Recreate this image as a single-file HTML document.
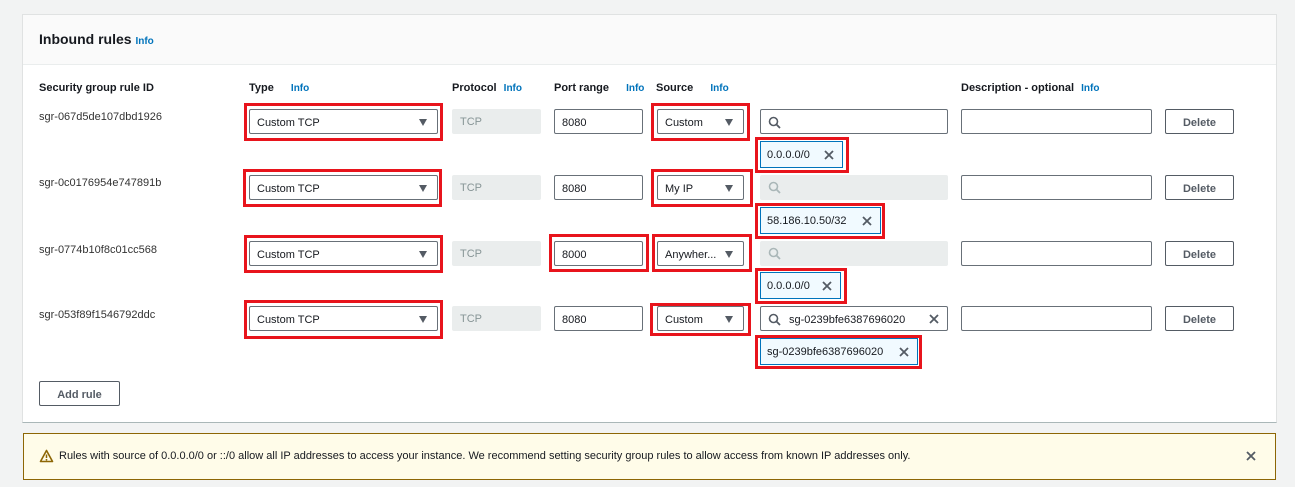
<!DOCTYPE html>
<html><head><meta charset="utf-8"><style>
*{box-sizing:border-box;margin:0;padding:0}
body{width:1295px;height:487px;background:#f2f3f3;font-family:"Liberation Sans",sans-serif;color:#16191f;position:relative;overflow:hidden;font-size:11px}
.a{position:absolute}
.panel{left:22px;top:14px;width:1255px;height:409px;background:#fff;border:1px solid #e0e2e2;border-bottom:1px solid #aab7b8}
.hdr{left:23px;top:15px;width:1253px;height:50px;background:#fafafa;border-bottom:1px solid #eaeded}
.info{color:#0073bb;font-weight:bold;font-size:10px}
.th{font-weight:bold;font-size:11px;top:82px}
.id{font-size:11px;color:#333}
.box{border:1px solid #687078;background:#fff;border-radius:2px;height:25px;line-height:26px;padding-left:7px;font-size:11px;color:#16191f}
.dis{background:#eaeded;border:none;color:#879596;border-radius:2px;height:25px;line-height:27px;padding-left:8px}
.caret{position:absolute;right:10px;top:9px;width:0;height:0;border-left:4.5px solid transparent;border-right:4.5px solid transparent;border-top:7px solid #545b64}
.red{border:3px solid #e8141c}
.tag{border:1px solid #0073bb;background:#f1faff;height:27px;line-height:27px;padding-left:6px;font-size:11px}
.x{position:absolute;right:6px;top:6px;width:14px;height:14px}
.btn{border:1px solid #545b64;background:#fff;border-radius:2px;height:25px;line-height:26px;text-align:center;font-weight:bold;color:#545b64;font-size:11px}
</style></head><body>
<div class="a panel"></div>
<div class="a hdr"></div>
<div class="a" style="left:39px;top:31px;font-size:14px;font-weight:bold">Inbound rules <span class="info" style="font-size:10px">Info</span></div>

<div class="a th" style="left:39px">Security group rule ID</div>
<div class="a th" style="left:249px">Type <span class="info" style="margin-left:14px">Info</span></div>
<div class="a th" style="left:452px">Protocol <span class="info" style="margin-left:4px">Info</span></div>
<div class="a th" style="left:554px">Port range <span class="info" style="margin-left:14px">Info</span></div>
<div class="a th" style="left:656px">Source <span class="info" style="margin-left:14px">Info</span></div>
<div class="a th" style="left:961px">Description - optional <span class="info" style="margin-left:4px">Info</span></div>

<svg width="0" height="0" style="position:absolute"><defs>
<g id="xi"><path d="M3 3L11 11M11 3L3 11" stroke="#545b64" stroke-width="1.8" fill="none"/></g>
<g id="mg"><circle cx="5.5" cy="5.5" r="4" stroke="currentColor" stroke-width="1.6" fill="none"/><path d="M8.5 8.5L12 12" stroke="currentColor" stroke-width="1.8"/></g>
</defs></svg>

<!-- Row 1 -->
<div class="a id" style="left:39px;top:111px">sgr-067d5de107dbd1926</div>
<div class="a red" style="left:244px;top:103px;width:199px;height:38px"></div>
<div class="a box" style="left:249px;top:109px;width:189px">Custom TCP<span class="caret"></span></div>
<div class="a dis" style="left:452px;top:109px;width:89px">TCP</div>
<div class="a box" style="left:554px;top:109px;width:89px">8080</div>
<div class="a red" style="left:651px;top:103px;width:99px;height:38px"></div>
<div class="a box" style="left:657px;top:109px;width:87px">Custom<span class="caret"></span></div>
<div class="a box" style="left:760px;top:109px;width:188px;color:#545b64"><svg width="13" height="13" style="margin-top:6px;vertical-align:top"><use href="#mg"/></svg></div>
<div class="a box" style="left:961px;top:109px;width:191px"></div>
<div class="a btn" style="left:1165px;top:109px;width:69px">Delete</div>
<div class="a red" style="left:755px;top:137px;width:94px;height:36px"></div>
<div class="a tag" style="left:760px;top:141px;width:83px">0.0.0.0/0<svg class="x"><use href="#xi"/></svg></div>

<!-- Row 2 -->
<div class="a id" style="left:39px;top:177px">sgr-0c0176954e747891b</div>
<div class="a red" style="left:243px;top:169px;width:199px;height:38px"></div>
<div class="a box" style="left:249px;top:175px;width:189px">Custom TCP<span class="caret"></span></div>
<div class="a dis" style="left:452px;top:175px;width:89px">TCP</div>
<div class="a box" style="left:554px;top:175px;width:89px">8080</div>
<div class="a red" style="left:651px;top:169px;width:102px;height:38px"></div>
<div class="a box" style="left:657px;top:175px;width:87px">My IP<span class="caret"></span></div>
<div class="a dis" style="left:760px;top:175px;width:188px;color:#aab7b8"><svg width="13" height="13" style="margin-top:6px;vertical-align:top"><use href="#mg"/></svg></div>
<div class="a box" style="left:961px;top:175px;width:191px"></div>
<div class="a btn" style="left:1165px;top:175px;width:69px">Delete</div>
<div class="a red" style="left:755px;top:203px;width:130px;height:36px"></div>
<div class="a tag" style="left:760px;top:207px;width:121px">58.186.10.50/32<svg class="x"><use href="#xi"/></svg></div>

<!-- Row 3 -->
<div class="a id" style="left:39px;top:244px">sgr-0774b10f8c01cc568</div>
<div class="a red" style="left:244px;top:235px;width:199px;height:38px"></div>
<div class="a box" style="left:249px;top:241px;width:189px">Custom TCP<span class="caret"></span></div>
<div class="a dis" style="left:452px;top:241px;width:89px">TCP</div>
<div class="a red" style="left:549px;top:234px;width:100px;height:38px"></div>
<div class="a box" style="left:554px;top:241px;width:89px">8000</div>
<div class="a red" style="left:652px;top:234px;width:100px;height:38px"></div>
<div class="a box" style="left:657px;top:241px;width:87px">Anywher...<span class="caret"></span></div>
<div class="a dis" style="left:760px;top:241px;width:188px;color:#aab7b8"><svg width="13" height="13" style="margin-top:6px;vertical-align:top"><use href="#mg"/></svg></div>
<div class="a box" style="left:961px;top:241px;width:191px"></div>
<div class="a btn" style="left:1165px;top:241px;width:69px">Delete</div>
<div class="a red" style="left:755px;top:268px;width:92px;height:36px"></div>
<div class="a tag" style="left:760px;top:272px;width:81px">0.0.0.0/0<svg class="x"><use href="#xi"/></svg></div>

<!-- Row 4 -->
<div class="a id" style="left:39px;top:309px">sgr-053f89f1546792ddc</div>
<div class="a red" style="left:244px;top:300px;width:199px;height:39px"></div>
<div class="a box" style="left:249px;top:306px;width:189px">Custom TCP<span class="caret"></span></div>
<div class="a dis" style="left:452px;top:306px;width:89px">TCP</div>
<div class="a box" style="left:554px;top:306px;width:89px">8080</div>
<div class="a red" style="left:650px;top:303px;width:101px;height:33px"></div>
<div class="a box" style="left:657px;top:306px;width:87px">Custom<span class="caret"></span></div>
<div class="a box" style="left:760px;top:306px;width:188px;color:#545b64"><svg width="13" height="13" style="margin-top:6px;vertical-align:top"><use href="#mg"/></svg><span style="margin-left:8px;vertical-align:top;color:#16191f">sg-0239bfe6387696020</span><svg class="x" style="top:5px"><use href="#xi"/></svg></div>
<div class="a box" style="left:961px;top:306px;width:191px"></div>
<div class="a btn" style="left:1165px;top:306px;width:69px">Delete</div>
<div class="a red" style="left:755px;top:335px;width:167px;height:34px"></div>
<div class="a tag" style="left:760px;top:338px;width:158px">sg-0239bfe6387696020<svg class="x"><use href="#xi"/></svg></div>

<div class="a btn" style="left:39px;top:381px;width:81px">Add rule</div>

<div class="a" style="left:23px;top:433px;width:1253px;height:47px;background:#fffce9;border:1px solid #8d6605"></div>
<svg class="a" style="left:39px;top:449px" width="15" height="14"><path d="M7.5 1.5L13.5 12.5H1.5Z" stroke="#8d6605" stroke-width="1.6" fill="none" stroke-linejoin="round"/><path d="M7.5 5.5V9" stroke="#8d6605" stroke-width="1.5"/><circle cx="7.5" cy="10.8" r="0.9" fill="#8d6605"/></svg>
<div class="a" style="left:59px;top:450px;font-size:11px;color:#16191f">Rules with source of 0.0.0.0/0 or ::/0 allow all IP addresses to access your instance. We recommend setting security group rules to allow access from known IP addresses only.</div>
<svg class="a" style="left:1244px;top:449px" width="14" height="14"><use href="#xi"/></svg>
</body></html>
